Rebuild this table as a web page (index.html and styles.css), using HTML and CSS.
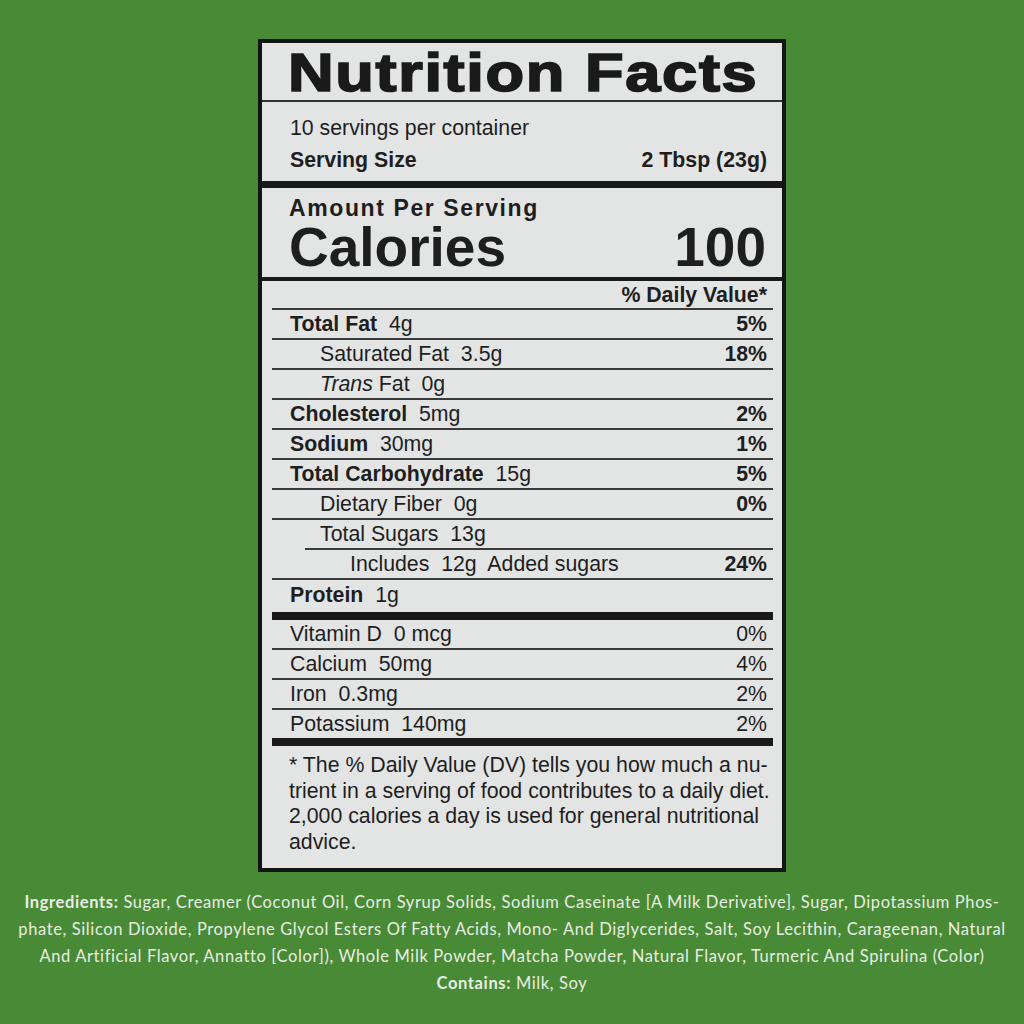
FILE: index.html
```html
<!DOCTYPE html>
<html lang="en">
<head>
<meta charset="utf-8">
<title>Nutrition Facts</title>
<link rel="stylesheet" href="styles.css">
</head>
<body>
<main class="page">
  <section class="label">
    <h1 class="title"><span class="title-text">Nutrition Facts</span></h1>
    <div class="serv">
      <p class="line">10 servings per container</p>
      <p class="line split bold"><span>Serving Size</span><span>2 Tbsp (23g)</span></p>
    </div>
    <div class="cal">
      <p class="amount">Amount Per Serving</p>
      <p class="calories"><span>Calories</span><span>100</span></p>
    </div>
    <div class="nutrients">
      <div class="row dv"><b>% Daily Value*</b></div>
      <div class="row"><span><b>Total Fat</b>&nbsp; 4g</span><b>5%</b></div>
      <div class="row in1"><span>Saturated Fat&nbsp; 3.5g</span><b>18%</b></div>
      <div class="row in1"><span><i>Trans</i> Fat&nbsp; 0g</span></div>
      <div class="row"><span><b>Cholesterol</b>&nbsp; 5mg</span><b>2%</b></div>
      <div class="row"><span><b>Sodium</b>&nbsp; 30mg</span><b>1%</b></div>
      <div class="row"><span><b>Total Carbohydrate</b>&nbsp; 15g</span><b>5%</b></div>
      <div class="row in1"><span>Dietary Fiber&nbsp; 0g</span><b>0%</b></div>
      <div class="row sugars"><span>Total Sugars&nbsp; 13g</span></div>
      <div class="row in2"><span>Includes&nbsp; 12g&nbsp; Added sugars</span><b>24%</b></div>
      <div class="row protein"><span><b>Protein</b>&nbsp; 1g</span></div>
      <div class="bar"></div>
      <div class="row"><span>Vitamin D&nbsp; 0 mcg</span><span>0%</span></div>
      <div class="row"><span>Calcium&nbsp; 50mg</span><span>4%</span></div>
      <div class="row"><span>Iron&nbsp; 0.3mg</span><span>2%</span></div>
      <div class="row last"><span>Potassium&nbsp; 140mg</span><span>2%</span></div>
      <div class="bar"></div>
    </div>
    <p class="foot">* The % Daily Value (DV) tells you how much a nu-<br>trient in a serving of food contributes to a daily diet.<br>2,000 calories a day is used for general nutritional<br>advice.</p>
  </section>
  <p class="ingredients"><b>Ingredients:</b> Sugar, Creamer (Coconut Oil, Corn Syrup Solids, Sodium Caseinate [A Milk Derivative], Sugar, Dipotassium Phos-<br>phate, Silicon Dioxide, Propylene Glycol Esters Of Fatty Acids, Mono- And Diglycerides, Salt, Soy Lecithin, Carageenan, Natural<br>And Artificial Flavor, Annatto [Color]), Whole Milk Powder, Matcha Powder, Natural Flavor, Turmeric And Spirulina (Color)<br><b>Contains:</b> Milk, Soy</p>
</main>
</body>
</html>
```

FILE: styles.css
```css
* { box-sizing: border-box; }
html, body { margin: 0; padding: 0; }
body {
  background: #488a36;
  width: 1024px;
  height: 1024px;
  overflow: hidden;
}
.page {
  padding-top: 39px;
}
.label {
  margin-left: 258px;
  width: 528px;
  border: 4px solid #141414;
  background: #e3e4e4;
  color: #1e1e1e;
  font-family: "Liberation Sans", Arial, sans-serif;
  font-size: 21.3px;
}
p { margin: 0; }
.title {
  margin: 0;
  height: 59px;
  padding-left: 26px;
  border-bottom: 2px solid #333;
  font-size: 54px;
  line-height: 58px;
  font-weight: 700;
  white-space: nowrap;
}
.title-text {
  display: inline-block;
  transform: scaleX(1.17);
  transform-origin: left center;
  letter-spacing: 1.4px;
  -webkit-text-stroke: 1.7px #1a1a1a;
  color: #1a1a1a;
}
.serv {
  padding: 10px 15px 5px 28px;
  border-bottom: 7px solid #1a1a1a;
}
.line {
  height: 32px;
  line-height: 32px;
  white-space: nowrap;
}
.split {
  display: flex;
  justify-content: space-between;
}
.bold { font-weight: 700; }
.cal {
  padding: 8px 16px 3px 27px;
  border-bottom: 4px solid #1a1a1a;
}
.amount {
  font-weight: 700;
  font-size: 23px;
  letter-spacing: 1.6px;
  line-height: 24px;
  height: 24px;
}
.calories {
  display: flex;
  justify-content: space-between;
  font-weight: 700;
  font-size: 55px;
  line-height: 54px;
  height: 54px;
}
.nutrients {
  margin: 0 9px 0 10px;
}
.row {
  display: flex;
  justify-content: space-between;
  align-items: center;
  height: 30px;
  padding: 1px 6px 0 18px;
  border-bottom: 2px solid #3a3a3a;
  white-space: nowrap;
}
.row.dv {
  height: 29px;
  justify-content: flex-end;
}
.row.in1 { padding-left: 48px; }
.row.sugars {
  margin-left: 33px;
  padding-left: 15px;
}
.row.in2 { padding-left: 78px; }
.row.protein {
  border-bottom: none;
  height: 32px;
  padding-bottom: 3px;
}
.row.last { border-bottom: none; height: 28px; }
.bar {
  height: 8px;
  background: #1a1a1a;
}
.foot {
  padding: 7px 6px 12px 27px;
  line-height: 25.7px;
  white-space: nowrap;
}
.ingredients {
  margin-top: 17px;
  text-align: center;
  font-family: Lato, "Open Sans", sans-serif;
  font-size: 16.5px;
  letter-spacing: 0.62px;
  line-height: 27px;
  color: #e8eee3;
  white-space: nowrap;
}
.ingredients b { font-weight: 700; }
```
